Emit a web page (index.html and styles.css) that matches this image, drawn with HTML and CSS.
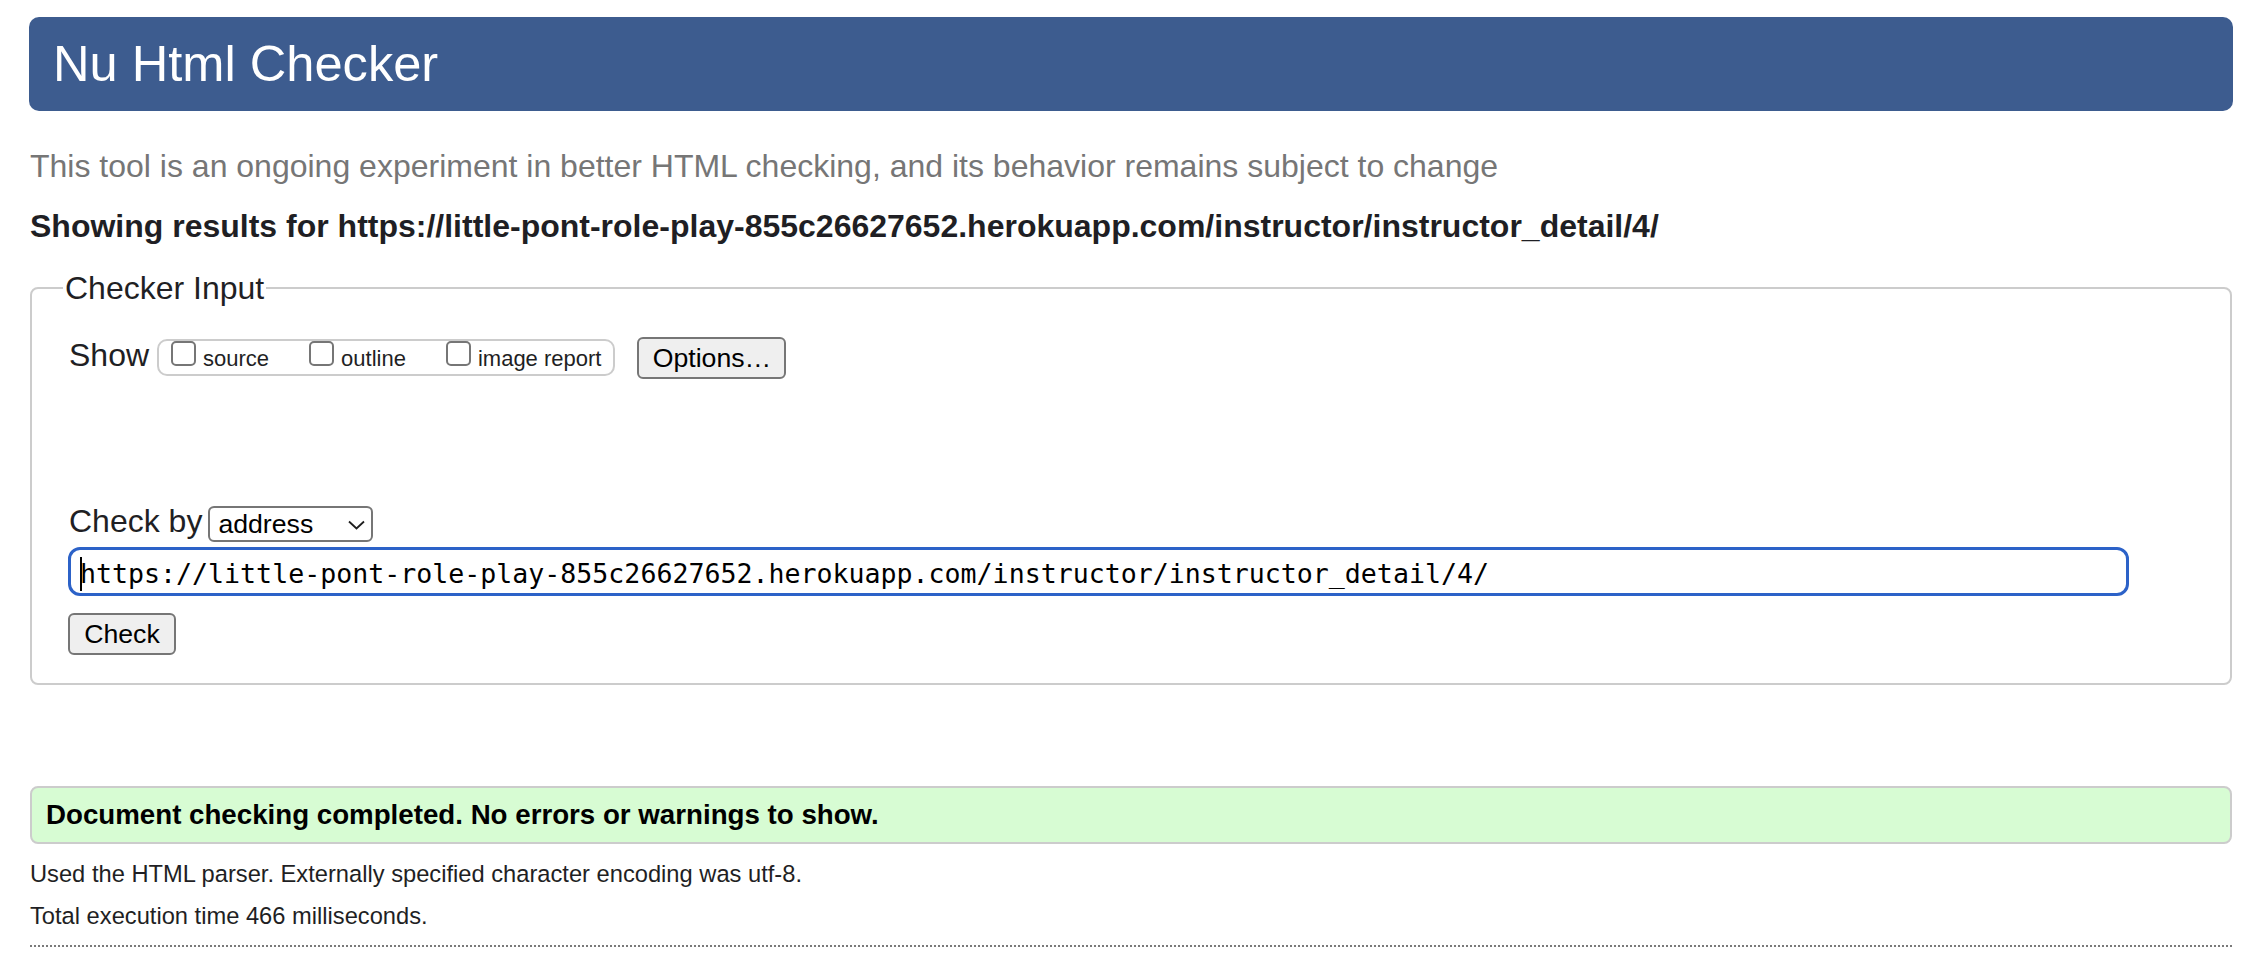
FILE: index.html
```html
<!DOCTYPE html>
<html lang="en">
<head>
<meta charset="utf-8">
<title>Nu Html Checker</title>
<link rel="stylesheet" href="styles.css">
</head>
<body>
<div class="page">
  <h1 class="title">Nu Html Checker</h1>
  <p class="intro">This tool is an ongoing experiment in better HTML checking, and its behavior remains subject to change</p>
  <h2 class="results-for">Showing results for https://little-pont-role-play-855c26627652.herokuapp.com/instructor/instructor_detail/4/</h2>
  <fieldset class="checker">
    <legend class="checker-legend">Checker Input</legend>
    <div class="show-row">
      <span class="row-label">Show</span>
      <div class="show-group">
        <label class="opt"><input type="checkbox" class="box"><span class="opt-text">source</span></label>
        <label class="opt"><input type="checkbox" class="box"><span class="opt-text">outline</span></label>
        <label class="opt"><input type="checkbox" class="box"><span class="opt-text">image report</span></label>
      </div>
      <button class="btn btn-options" type="button">Options…</button>
    </div>
    <div class="checkby-row">
      <span class="row-label">Check by</span>
      <div class="select">
        <span class="select-text">address</span>
        <svg class="chevron" width="17" height="10" viewBox="0 0 17 10"><polyline points="1,1.5 8.5,8.5 16,1.5" fill="none" stroke="#1e1e1e" stroke-width="1.8"/></svg>
      </div>
    </div>
    <div class="url-input"><span class="caret"></span>https://little-pont-role-play-855c26627652.herokuapp.com/instructor/instructor_detail/4/</div>
    <button class="btn btn-check" type="button">Check</button>
  </fieldset>
  <div class="success">Document checking completed. No errors or warnings to show.</div>
  <p class="meta">Used the HTML parser. Externally specified character encoding was utf-8.</p>
  <p class="meta">Total execution time 466 milliseconds.</p>
  <div class="rule"></div>
</div>
</body>
</html>
```
FILE: styles.css
```css
html, body {
  margin: 0;
  padding: 0;
  background: #ffffff;
}

body {
  font-family: "Liberation Sans", Arial, Helvetica, sans-serif;
  color: #222222;
}

.page {
  padding: 17px 17px 0 29px;
}

.title {
  margin: 0;
  height: 94px;
  line-height: 94px;
  padding: 0 0 0 24px;
  background: #3d5c8f;
  color: #ffffff;
  border-radius: 10px;
  font-size: 50.6px;
  font-weight: normal;
}

.intro {
  margin: 35px 0 0 1px;
  font-size: 32px;
  line-height: 40px;
  color: #767676;
}

.results-for {
  margin: 20px 0 0 1px;
  font-size: 32px;
  line-height: 40px;
  font-weight: bold;
  color: #1f1f24;
}

.checker {
  margin: 24px 1px 0 1px;
  padding: 31px 20px 28px 37px;
  border: 2px solid #cccccc;
  border-radius: 8px;
  min-width: 0;
}

.checker-legend {
  margin-left: -6px;
  padding: 0 2px;
  font-size: 32px;
  line-height: 36px;
  color: #1f1f24;
}

.show-row {
  display: flex;
  align-items: flex-start;
  height: 42px;
}

.row-label {
  font-size: 32px;
  line-height: 36px;
  color: #1f1f24;
  white-space: nowrap;
}

.show-group {
  display: flex;
  align-items: flex-start;
  margin: 2px 0 0 8px;
  height: 33px;
  padding: 0 12px 0 12px;
  border: 2px solid #cccccc;
  border-radius: 10px;
}

.opt {
  display: flex;
  align-items: flex-start;
}

.opt + .opt {
  margin-left: 40px;
}

.box {
  appearance: none;
  -webkit-appearance: none;
  width: 25px;
  height: 25px;
  margin: 0;
  border: 2px solid #767676;
  border-radius: 5px;
  background: #ffffff;
}

.opt-text {
  margin: 5px 0 0 7px;
  font-size: 22px;
  line-height: 25px;
  color: #1f1f24;
}

.btn {
  font-family: "Liberation Sans", Arial, Helvetica, sans-serif;
  font-size: 26.67px;
  line-height: 38px;
  height: 42px;
  padding: 0;
  margin: 0;
  background: #efefef;
  color: #000000;
  border: 2px solid #767676;
  border-radius: 6px;
  text-align: center;
}

.btn-options {
  width: 149px;
  margin-left: 22px;
}

.checkby-row {
  display: flex;
  align-items: flex-start;
  margin-top: 124px;
}

.select {
  display: flex;
  align-items: center;
  justify-content: space-between;
  box-sizing: border-box;
  width: 165px;
  height: 36px;
  margin: 3px 0 0 6px;
  padding: 0 6px 0 8px;
  border: 2px solid #767676;
  border-radius: 6px;
  background: #ffffff;
}

.select-text {
  font-size: 26.67px;
  line-height: 32px;
  color: #000000;
}

.chevron {
  display: block;
  margin-top: 2px;
}

.url-input {
  box-sizing: border-box;
  width: 2061px;
  height: 49px;
  margin: 5px 0 0 -1px;
  padding: 4px 0 0 10px;
  border: 3px solid #2c62c8;
  border-radius: 12px;
  font-family: "DejaVu Sans Mono", "Liberation Mono", monospace;
  font-size: 26.6px;
  line-height: 39px;
  color: #000000;
  white-space: nowrap;
  overflow: hidden;
}

.caret {
  display: inline-block;
  width: 2px;
  height: 34px;
  margin: 0 -2px 0 -1px;
  vertical-align: -8px;
  background: #000000;
}

.btn-check {
  display: block;
  width: 108px;
  margin: 17px 0 0 -1px;
}

.success {
  margin: 101px 1px 0 1px;
  height: 54px;
  padding: 0 0 0 14px;
  border: 2px solid #cccccc;
  border-radius: 8px;
  background: #d7fcd3;
  font-size: 27.7px;
  line-height: 54px;
  font-weight: bold;
  color: #000000;
}

.meta {
  margin: 0 0 0 1px;
  font-size: 23.7px;
  line-height: 42px;
  color: #1f1f24;
}

.success + .meta {
  margin-top: 9px;
}

.rule {
  margin: 8px 1px 0 1px;
  border-top: 2px dotted #7a7a7a;
}
```
